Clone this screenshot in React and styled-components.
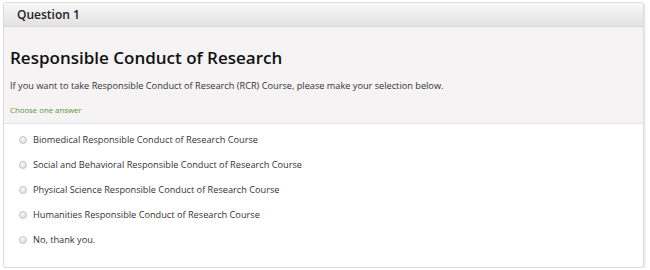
import React from "react";
import styled, { createGlobalStyle } from "styled-components";

const Global = createGlobalStyle`
    body {
        margin: 0;
        background: #fff;
        font-family: "Open Sans", "Liberation Sans", sans-serif;
    }
`;

const Page = styled.div`
    padding: 2px 6px 0 3px;
`;

const Panel = styled.div`
    border: 1px solid #dcdcdc;
    border-radius: 3px;
    box-shadow: 1px 1px 2px rgba(0, 0, 0, 0.12);
    background: #fff;
    overflow: hidden;
`;

const Header = styled.div`
    height: 23px;
    display: flex;
    align-items: center;
    padding-left: 13px;
    background: linear-gradient(#f8f8f8, #e2e2e2);
    border-bottom: 1px solid #d8d8d8;
    font-size: 12px;
    font-weight: 600;
    color: #222;
`;

const Intro = styled.div`
    background: #f5f3f3;
    padding: 16px 6px 7px;
    border-bottom: 1px solid #e4e4e4;
`;

const Title = styled.h1`
    margin: 0;
    font-size: 17px;
    font-weight: 600;
    color: #111;
    line-height: 30px;
`;

const Desc = styled.p`
    margin: 6px 0 0;
    font-size: 9.2px;
    color: #333;
    line-height: 14px;
`;

const Hint = styled.div`
    margin-top: 11px;
    font-size: 7.8px;
    color: #5f9340;
    line-height: 12px;
`;

const Options = styled.div`
    display: flex;
    flex-direction: column;
    gap: 10px;
    padding: 8px 0 20px 15px;
`;

const Option = styled.label`
    display: flex;
    align-items: center;
    gap: 6px;
    height: 15px;
    font-size: 9.2px;
    color: #333;
`;

const Radio = styled.span`
    box-sizing: border-box;
    width: 8px;
    height: 8px;
    border-radius: 50%;
    border: 1px solid #c4c4c4;
    background: radial-gradient(circle at 40% 35%, #fafafa, #d6d6d6);
`;

const choices = [
    "Biomedical Responsible Conduct of Research Course",
    "Social and Behavioral Responsible Conduct of Research Course",
    "Physical Science Responsible Conduct of Research Course",
    "Humanities Responsible Conduct of Research Course",
    "No, thank you.",
];

export default () => {
    return (
        <Page>
            <Global />
            <Panel>
                <Header>Question 1</Header>
                <Intro>
                    <Title>Responsible Conduct of Research</Title>
                    <Desc>
                        If you want to take Responsible Conduct of Research (RCR) Course, please make your selection below.
                    </Desc>
                    <Hint>Choose one answer</Hint>
                </Intro>
                <Options>
                    {choices.map((c) => (
                        <Option key={c}>
                            <Radio />
                            {c}
                        </Option>
                    ))}
                </Options>
            </Panel>
        </Page>
    );
};
